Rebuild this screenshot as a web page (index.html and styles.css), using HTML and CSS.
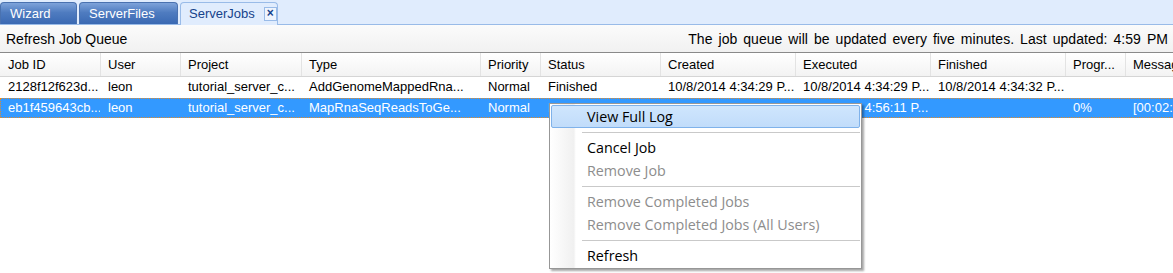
FILE: index.html
```html
<!DOCTYPE html>
<html>
<head>
<meta charset="utf-8">
<link rel="stylesheet" href="styles.css">
</head>
<body>
<div class="app">
  <div class="tabstrip">
    <div class="tab">Wizard</div>
    <div class="tab">ServerFiles</div>
    <div class="tab active"><span>ServerJobs</span><span class="close">×</span></div>
  </div>
  <div class="toolbar">
    <span>Refresh Job Queue</span>
    <span class="status">The job queue will be updated every five minutes. Last updated: 4:59 PM</span>
  </div>
  <div class="grid">
    <div class="row head">
      <div class="c">Job ID</div><div class="c">User</div><div class="c">Project</div><div class="c">Type</div><div class="c">Priority</div><div class="c">Status</div><div class="c">Created</div><div class="c">Executed</div><div class="c">Finished</div><div class="c">Progr...</div><div class="c">Message</div>
    </div>
    <div class="row">
      <div class="c">2128f12f623d...</div><div class="c">leon</div><div class="c">tutorial_server_c...</div><div class="c">AddGenomeMappedRna...</div><div class="c">Normal</div><div class="c">Finished</div><div class="c">10/8/2014 4:34:29 P...</div><div class="c">10/8/2014 4:34:29 P...</div><div class="c">10/8/2014 4:34:32 P...</div><div class="c"></div><div class="c"></div>
    </div>
    <div class="row sel">
      <div class="c">eb1f459643cb...</div><div class="c">leon</div><div class="c">tutorial_server_c...</div><div class="c">MapRnaSeqReadsToGe...</div><div class="c">Normal</div><div class="c">Running</div><div class="c">10/8/2014 4:56:11 P...</div><div class="c">10/8/2014 4:56:11 P...</div><div class="c"></div><div class="c">0%</div><div class="c">[00:02:34] Running</div>
    </div>
  </div>
  <div class="menu">
    <div class="item hot">View Full Log</div>
    <div class="sep"></div>
    <div class="item">Cancel Job</div>
    <div class="item off">Remove Job</div>
    <div class="sep"></div>
    <div class="item off">Remove Completed Jobs</div>
    <div class="item off">Remove Completed Jobs (All Users)</div>
    <div class="sep"></div>
    <div class="item">Refresh</div>
  </div>
</div>
</body>
</html>
```
FILE: styles.css
```css
html, body {
  margin: 0;
  padding: 0;
  background: #ffffff;
  overflow: hidden;
}
.app {
  width: 1173px;
  height: 273px;
  position: relative;
  overflow: hidden;
  font-family: "Liberation Sans", Arial, sans-serif;
}
.tabstrip {
  height: 24px;
  background: #e0ecfd;
  border-bottom: 1px solid #99bbe8;
  display: flex;
  align-items: flex-end;
  gap: 2px;
}
.tab {
  height: 22px;
  box-sizing: border-box;
  border: 1px solid #4a72b0;
  border-bottom: none;
  border-radius: 4px 4px 0 0;
  background: linear-gradient(#7ea3da, #4f7cc0 45%, #3a69b3);
  color: #ffffff;
  font-size: 13px;
  line-height: 21px;
  padding: 0 9px;
}
.tab:nth-child(1) { width: 77px; }
.tab:nth-child(2) { width: 99px; }
.tab.active {
  width: 98px;
  height: 23px;
  margin-bottom: -1px;
  background: #e0ecfd;
  border-color: #99bbe8;
  color: #15428b;
  display: flex;
  align-items: center;
  gap: 9px;
  padding: 0 0 1px 8px;
}
.close {
  width: 15px;
  height: 14px;
  box-sizing: border-box;
  border: 1px solid #99bbe8;
  background: #eef4fd;
  color: #15428b;
  font-size: 12px;
  line-height: 11px;
  text-align: center;
  font-weight: bold;
}
.toolbar {
  height: 27px;
  background: linear-gradient(#fbfbfb, #f1f1f1);
  border-bottom: 1px solid #8a8a8a;
  display: flex;
  justify-content: space-between;
  align-items: center;
  padding: 0 5px 0 6px;
  font-size: 14px;
  color: #000;
}
.status {
  word-spacing: 2px;
  letter-spacing: 0.05px;
}
.grid {
  width: 1400px;
  font-size: 13px;
}
.row {
  display: grid;
  grid-template-columns: 100px 80px 121px 179px 60px 120px 135px 135px 135px 60px 200px;
  height: 20px;
  line-height: 20px;
  color: #000;
}
.row .c {
  padding-left: 8px;
  white-space: nowrap;
  overflow: hidden;
}
.row.head {
  height: 23px;
  line-height: 23px;
  background: linear-gradient(#ffffff, #f3f3f3);
  border-bottom: 1px solid #d5d5d5;
}
.row.head .c {
  border-left: 1px solid #e3e3e3;
  padding-left: 7px;
}
.row.head .c:first-child { border-left: none; padding-left: 8px; }
.row.sel {
  margin-top: 1px;
  background: #3399ff;
  color: #ffffff;
  outline: 1px dotted #e08a2c;
  outline-offset: -1px;
}
.menu {
  position: absolute;
  left: 549px;
  top: 103px;
  width: 313px;
  box-sizing: border-box;
  border: 1px solid #979797;
  background: linear-gradient(90deg, #ffffff 0, #f0f0f0 24px, #fafafa 25px, #ffffff 26px);
  box-shadow: 2px 2px 2px rgba(0, 0, 0, 0.35);
  padding: 1px;
  font-family: "Open Sans", "Liberation Sans", sans-serif;
  font-size: 14.3px;
  color: #000;
}
.item {
  height: 23px;
  line-height: 22px;
  padding-left: 35px;
  color: #000;
  box-sizing: border-box;
  border: 1px solid transparent;
  white-space: nowrap;
}
.item.hot {
  background: linear-gradient(#cfe6fd, #c1dcfa);
  border-color: #7fb2ea;
  border-radius: 2px;
}
.item.off { color: #8d8d8d; }
.sep {
  height: 1px;
  background: #c9c9c9;
  margin: 4px 0 3px 31px;
}
```
